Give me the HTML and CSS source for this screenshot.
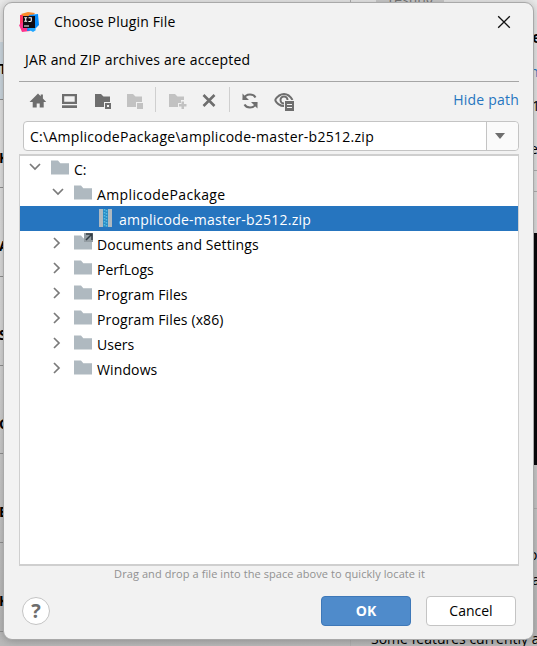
FILE: index.html
```html
<!DOCTYPE html>
<html lang="en">
<head>
<meta charset="utf-8">
<title>Choose Plugin File</title>
<link rel="stylesheet" href="styles.css">
</head>
<body>
<svg width="0" height="0" class="defs">
  <symbol id="folder" viewBox="0 0 18 15"><path d="M0 0.5h7l2.3 2.8H18V14.5H0z" fill="#afb9c0"/></symbol>
  <symbol id="right" viewBox="0 0 10 12"><path d="M2 1l5 5-5 5" fill="none" stroke="#7a7a7a" stroke-width="1.7"/></symbol>
  <symbol id="down" viewBox="0 0 12 10"><path d="M1 2l5 5 5-5" fill="none" stroke="#7a7a7a" stroke-width="1.7"/></symbol>
</svg>
<div class="backdrop">
  <div class="plugins">
    <div class="top"></div>
    <div class="plugin picked">T</div>
    <div class="plugin">K</div>
    <div class="plugin">A</div>
    <div class="plugin">S</div>
    <div class="plugin">G</div>
    <div class="plugin">E</div>
    <div class="plugin">K</div>
  </div>
  <div class="details">
    <div class="tag">Testing</div>
    <div class="line title">e</div>
    <div class="line link">n</div>
    <div class="line version">1</div>
    <div class="line tab">e</div>
    <div class="rule"></div>
    <div class="rule second"></div>
    <div class="preview"></div>
    <div class="rule third"></div>
    <div class="line body1">o</div>
    <div class="line body2">a</div>
    <div class="features">Some features currently a</div>
  </div>
</div>
<main class="dialog">
  <header class="titlebar">
    <svg class="logo" width="20" height="20" viewBox="0 0 20 20">
      <path d="M1 3l8-1-5 10-3 2z" fill="#fe315d"/><path d="M0 13l7-5 4 11-8 1z" fill="#ff318c"/><path d="M2 2l7-2 7 1-6 8z" fill="#fb8b2c"/><path d="M10 3l9-1 1 11-5 5-7 1z" fill="#078cfb"/><path d="M9 17l4-4 4 5-3 2z" fill="#21a6ff"/>
      <rect x="4" y="4" width="12" height="12" fill="#100b12"/>
      <path d="M5.2 5.8h3M6.7 5.8v3.5M5.2 9.3h3M9.5 5.8h2.8v2.7q0 1-1.2 1H9.4" fill="none" stroke="#fff" stroke-width="1.1"/><path d="M5 14h5" stroke="#fff" stroke-width="1"/>
    </svg>
    <h1>Choose Plugin File</h1>
    <svg class="close" width="14" height="14" viewBox="0 0 14 14"><path d="M1.2 1.2l11.6 11.6M12.8 1.2L1.2 12.8" stroke="#111" stroke-width="1.3"/></svg>
  </header>
  <p class="description"><span>JAR and ZIP archives are accepted</span></p>
  <nav class="toolbar">
    <svg width="255" height="28" viewBox="0 0 255 28" fill="#6e6e6e">
      <path d="M10.500 14.500L19 6l2.700 2.700V7h2.200v4l3.300 3.500h-2.500V20h-4v-4h-3v4h-4v-5.500z" transform="translate(0 .5)"/>
      <path fill-rule="evenodd" d="M43 7h15v10H43zM45.200 9.200v5.500h10.500V9.200z"/><path d="M43 18.300h15V21H43z"/>
      <path d="M76 7h6l2.500 2.500H91V15h-6v5H76z"/><path fill-rule="evenodd" d="M86 16h6v6h-6zM88 18v2h2v-2z"/>
      <g fill="#c2c2c2"><path d="M108 7h6l2.500 2.500h6.500V15h-6v5h-9z"/><path d="M118 16h6v6h-6z"/><path d="M150 7h6l2.500 2.500h6.500V13h-3v3h-3v4h-9z"/><path d="M162.500 14.500h2.500v2.500h2.500v2.500H165V22h-2.500v-2.500H160V17h2.500z"/></g>
      <path d="M136.500 0v25M210.500 0v25" stroke="#cfcfcf"/>
      <path d="M184.500 8l11 11M195.500 8l-11 11" stroke="#6e6e6e" stroke-width="2.600"/>
      <path d="M224.500 12.500q1.500-5 6.500-5 4 0 5.500 3M237.500 15.500q-1.500 5-6.500 5-4 0-5.500-3" fill="none" stroke="#6e6e6e" stroke-width="2"/><path d="M223.500 6.500v6.500h6.500zM238.500 21.500V15H232z"/>
    </svg>
    <svg width="20" height="20" viewBox="0 0 20 20" class="eye"><path d="M1 8q4-6 9-6t8.500 6" fill="none" stroke="#6e6e6e" stroke-width="2"/><path d="M1 8q3 6 9 6" fill="none" stroke="#6e6e6e" stroke-width="2"/><circle cx="10" cy="8" r="3.500" fill="none" stroke="#6e6e6e" stroke-width="2"/><path d="M10 8h10v11H10z" fill="#f2f2f2"/><path d="M11 9h9v10h-9z" fill="#6e6e6e"/><path d="M13 12.500h5M13 15.500h5" stroke="#f2f2f2" stroke-width="1.200"/></svg>
    <a>Hide path</a>
  </nav>
  <div class="path"><span>C:\AmplicodePackage\amplicode-master-b2512.zip</span><div class="arrow"></div></div>
  <section class="tree">
    <div class="row root"><svg class="chev down"><use href="#down"/></svg><svg class="folder"><use href="#folder"/></svg><span>C:</span></div>
    <div class="row"><svg class="chev down"><use href="#down"/></svg><svg class="folder"><use href="#folder"/></svg><span class="t-package">AmplicodePackage</span></div>
    <div class="row selected"><svg class="zip" width="13" height="18" viewBox="0 0 13 18"><path d="M0 0h4v18H0zM9 0h4v18H9z" fill="#afb9c0"/><path d="M4 0h5v18H4z" fill="#278bc4"/><path d="M5.500 0v18M7.500 1v17" stroke="#57bce5" stroke-width="1.500" stroke-dasharray="1.500 1.500"/></svg><span class="t-zip">amplicode-master-b2512.zip</span></div>
    <div class="row"><svg class="chev"><use href="#right"/></svg><svg class="folder link-folder" viewBox="0 0 19 18"><path d="M0 3.500h7l2.300 2.800H18V17.500H0z" fill="#afb9c0"/><path d="M10 1h9v9h-9z" fill="#949da3"/><path d="M12 2h6v6M17.500 2.500L12 8" fill="none" stroke="#333d44" stroke-width="1.500"/></svg><span class="t-docs">Documents and Settings</span></div>
    <div class="row"><svg class="chev"><use href="#right"/></svg><svg class="folder"><use href="#folder"/></svg><span>PerfLogs</span></div>
    <div class="row"><svg class="chev"><use href="#right"/></svg><svg class="folder"><use href="#folder"/></svg><span class="t-docs">Program Files</span></div>
    <div class="row"><svg class="chev"><use href="#right"/></svg><svg class="folder"><use href="#folder"/></svg><span class="t-docs">Program Files (x86)</span></div>
    <div class="row"><svg class="chev"><use href="#right"/></svg><svg class="folder"><use href="#folder"/></svg><span>Users</span></div>
    <div class="row"><svg class="chev"><use href="#right"/></svg><svg class="folder"><use href="#folder"/></svg><span class="t-docs">Windows</span></div>
  </section>
  <p class="hint"><span>Drag and drop a file into the space above to quickly locate it</span></p>
  <footer class="actions">
    <button class="help">?</button>
    <button class="ok">OK</button>
    <button class="cancel"><span>Cancel</span></button>
  </footer>
</main>
</body>
</html>
```

FILE: styles.css
```css
* { box-sizing: border-box; }
body { margin: 0; width: 537px; height: 646px; overflow: hidden; position: relative; font: 14px/20px "Open Sans", "Noto Sans", sans-serif; color: #000; }
h1, p { margin: 0; font-size: 14px; font-weight: 400; }
.defs { position: absolute; }
svg { display: block; flex: none; }

.backdrop { display: flex; height: 646px; background: linear-gradient(#e9e9e9, #dadada 50%, #b9b9b9); }
.plugins { width: 351px; border-right: 1px solid #b0b0b0; overflow: hidden; }
.top { height: 11px; }
.plugin { height: 88.700px; padding-top: 48px; border-bottom: 1px solid #929292; font-weight: 700; text-indent: -1px; }
.picked { background: linear-gradient(transparent 31px, #ced9e1 31px); }
.details { width: 186px; height: 646px; overflow: hidden; }
.tag { width: 68px; height: 3px; margin-left: 25px; background: #ccc; color: #777; text-align: center; line-height: 0; overflow: hidden; }
.line { height: 20px; padding-left: 181px; }
.title { margin-top: 24px; font-weight: 700; font-size: 16px; }
.link { margin-top: 15px; padding-left: 179px; color: #2675bf; }
.version { margin-top: 14px; }
.tab { margin-top: 23px; padding-left: 179px; }
.rule { margin-top: 11px; border-top: 1px solid #b0b0b0; }
.second { margin-top: 20px; }
.preview { height: 232px; margin-top: 41px; background: #08080b; }
.third { margin-top: 43px; }
.body1 { margin-top: 36px; padding-left: 178px; }
.body2 { margin-top: 5px; }
.features { margin: 39px 0 0 20px; white-space: nowrap; }

.dialog { position: absolute; left: 3px; top: 2px; width: 531px; height: 638px; padding: 0 14px 0 15px; display: flex; flex-direction: column; background: #f2f2f2; border: 1px solid #a9a9a9; border-radius: 9px; box-shadow: 0 1px 8px rgba(0,0,0,.25); }
.titlebar { display: flex; align-items: center; height: 37px; }
.titlebar h1 { margin-left: 15px; flex: 1; letter-spacing: .17px; }
.close { margin-right: 8px; }
.description { height: 42px; padding: 10px 0 0 6px; border-bottom: 1px solid #a6a6a6; letter-spacing: .19px; }
.toolbar { display: flex; height: 41px; padding-top: 5px; }
.toolbar a { margin: 3px 0 0 auto; color: #2675bf; letter-spacing: .22px; }
.eye { margin-top: 5px; }
.path { display: flex; align-items: center; height: 30px; margin: -2px 0 0 4px; border: 1px solid #c4c4c4; border-radius: 4px; background: #fff; padding-left: 6px; }
.path span { flex: 1; padding-top: 2px; white-space: nowrap; letter-spacing: .28px; }
.arrow { width: 32px; height: 28px; border-left: 1px solid #c4c4c4; display: grid; align-items: center; padding-left: 8px; border-radius: 0 4px 4px 0; background: #fafafa; }
.arrow::after { content: ""; width: 0; border: 5.500px solid transparent; border-top: 6px solid #6e6e6e; border-bottom: 0; }
.tree { height: 412px; margin-top: 3px; border: 1px solid #cfcfcf; border-width: 2px 1px 2px; background: #fff; }
.row { display: flex; align-items: center; height: 25px; padding-left: 32px; white-space: nowrap; }
.row span { padding-top: 2px; }
.root { padding-left: 9px; }
.chev { width: 10px; height: 12px; margin: -2px 12px 0 0; }
.chev.down { width: 12px; height: 10px; margin: -3px 10px 0 0; }
.folder { width: 18px; height: 15px; margin: -3px 5px 0 0; }
.link-folder { width: 19px; height: 18px; margin: -6px 4px 0 0; }
.selected { background: #2675bf; color: #fff; padding-left: 79px; }
.zip { margin: -2px 7px 0 0; }
.t-package { letter-spacing: .38px; }
.t-zip { letter-spacing: .24px; }
.t-docs { letter-spacing: .12px; }
.hint { height: 22px; padding-left: 1px; text-align: center; color: #919191; font-size: 11px; line-height: 16px; letter-spacing: .08px; }
.actions { display: flex; align-items: center; padding: 8px 3px 0 3px; }
button { height: 30px; padding: 0; border: 1px solid #c4c4c4; border-radius: 4px; background: #fff; font: inherit; color: #000; }
.help { width: 28px; height: 28px; border-radius: 50%; color: #6e6e6e; font-size: 20px; font-weight: 700; line-height: 26px; }
.ok { width: 90px; margin-left: auto; background: #4f8bcb; border-color: #3e78b8; color: #fff; font-weight: 700; }
.cancel { width: 90px; margin-left: 15px; }
```
